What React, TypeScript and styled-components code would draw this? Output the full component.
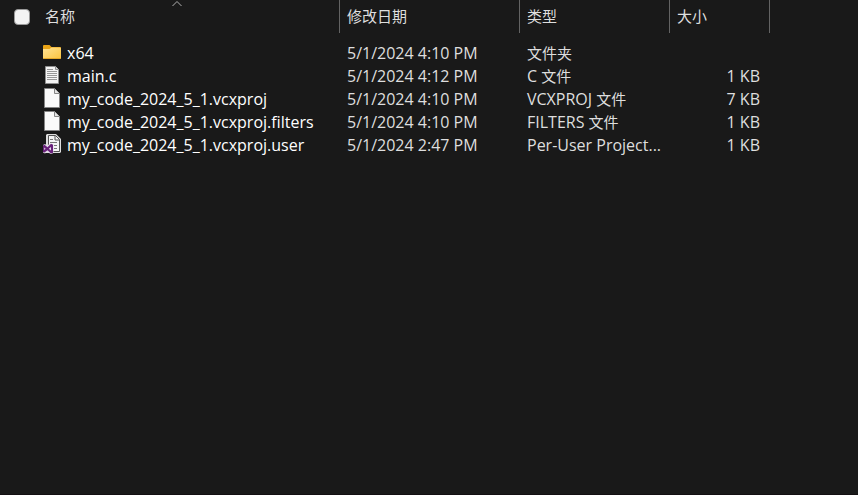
import React from "react";
import styled, { createGlobalStyle } from "styled-components";

const GlobalStyle = createGlobalStyle`
  body {
    margin: 0;
    background: #191919;
    color: #dedede;
    font: 16px/23px "Open Sans", "Noto Sans CJK SC", sans-serif;
  }
`;

const Pane = styled.main`
  box-sizing: border-box;
  min-height: 100vh;
  overflow: hidden;
  border-bottom: 1px solid #130f12;
`;

const FileTable = styled.table`
  width: 100%;
  table-layout: fixed;
  border-collapse: separate;
  border-spacing: 0;
`;

const Column = styled.col<{ $width?: number }>`
  width: ${(p) => (p.$width ? `${p.$width}px` : "auto")};
`;

const HeaderCell = styled.th`
  height: 33px;
  padding: 0;
  border-right: 1px solid #636363;
  box-sizing: border-box;
  font-weight: 400;
  text-align: left;
`;

const HeaderFiller = styled.td`
  padding: 0;
`;

const NameHeader = styled.div`
  position: relative;
  display: flex;
  align-items: center;
  gap: 8px;
  height: 33px;
  margin-left: 14px;
`;

const SortMark = styled.svg`
  position: absolute;
  top: 0;
  left: 50%;
  width: 12px;
  height: 7px;
  margin-left: -6px;
`;

const SelectAll = styled.input`
  appearance: none;
  width: 16px;
  height: 16px;
  margin: 0;
  border: 1px solid #9a9a9a;
  border-radius: 4px;
  background: #f3f3f3;
  &:checked {
    background: #4cc2ff;
  }
`;

const HeaderButton = styled.button`
  flex: 1;
  width: 100%;
  height: 33px;
  padding: 0 7px;
  border: 0;
  background: none;
  color: inherit;
  font: inherit;
  font-size: 15px;
  text-align: left;
`;

const Body = styled.tbody`
  &::before {
    content: "";
    display: block;
    height: 9px;
  }
`;

const Row = styled.tr`
  height: 23px;
  &:hover {
    background: #222222;
  }
`;

const Cell = styled.td<{ $align?: "right" }>`
  height: 23px;
  padding: ${(p) => (p.$align === "right" ? "0 10px 0 7px" : "0 2px 0 7px")};
  overflow: hidden;
  white-space: nowrap;
  text-overflow: ellipsis;
  text-align: ${(p) => p.$align ?? "left"};
`;

const Han = styled.span`
  font-size: 15px;
  line-height: 20px;
`;

const NameCell = styled.td`
  padding: 0 8px 0 42px;
`;

const FileName = styled.div`
  display: flex;
  align-items: center;
  gap: 5px;
  height: 23px;
  color: #ffffff;
  white-space: nowrap;
`;

const FileIcon = styled.svg`
  flex: none;
  width: 20px;
  height: 20px;
  margin-bottom: 3px;
`;

type Kind = "folder" | "text" | "blank" | "project";

const Icon = ({ kind }: { kind: Kind }) => (
  <FileIcon viewBox="0 0 20 20" aria-hidden="true">
    {kind === "folder" && (
      <>
        <defs>
          <linearGradient id="folder" x1="0" y1="0" x2="1" y2="1">
            <stop offset="0" stopColor="#ffe395" />
            <stop offset="1" stopColor="#fcc43e" />
          </linearGradient>
        </defs>
        <path d="M1 4a1 1 0 0 1 1-1h5.500l2 2H18a1 1 0 0 1 1 1v4H1z" fill="#e9a316" />
        <path d="M1 7h6.500l2-1.500H18a1 1 0 0 1 1 1V16a1 1 0 0 1-1 1H2a1 1 0 0 1-1-1z" fill="url(#folder)" />
        <path d="M1.500 16.500h17" stroke="#e6a92a" />
      </>
    )}
    {kind === "text" && (
      <>
        <path d="M3.500 1.500h10l3 3v14h-13z" fill="#f4f4f4" stroke="#909090" />
        <path d="M13.500 1.500v3h3" fill="#d9d9d9" stroke="#909090" />
        <path d="M5 4.500h6M5 6.500h10M5 8.500h10M5 10.500h10M5 12.500h10M5 14.500h10" stroke="#969696" />
      </>
    )}
    {kind === "blank" && (
      <>
        <path d="M2.500 .5h10l5 5v14h-15z" fill="#fafafa" stroke="#858585" />
        <path d="M12.500 .5v5h5" fill="#e4e4e4" stroke="#858585" />
      </>
    )}
    {kind === "project" && (
      <>
        <path d="M5 0h9l5 5v13l-1 1H4V1z" fill="#dedede" />
        <path d="M6.500 1.500h7l4 4v12h-11z" fill="#f5f5f5" stroke="#555555" />
        <path d="M13 1.500V6h4.500" fill="none" stroke="#555555" />
        <path d="M8 5.500h3M8 8.500h7M12 11.500h3M12 14.500h3" stroke="#777777" />
        <path d="M1 11l2-1 2 1.500L8.500 9.500l3 1v8.500L9 20l-4-2-2 1.500-2-1z" fill="#e3dbe7" />
        <path
          fillRule="evenodd"
          d="M1 11.500l1.500-.7 3 2.400L9 9.800l2 .9v8l-2 .8-3.500-3.200-3 2.300L1 18zm1.200 2v2.400l1.400-1.200zM6.800 14.700L9 16.500v-3.600z"
          fill="#68217a"
        />
      </>
    )}
  </FileIcon>
);

interface FileEntry {
  name: string;
  kind: Kind;
  date: string;
  type: string;
  han?: string;
  size: string;
}

const files: FileEntry[] = [
  { name: "x64", kind: "folder", date: "5/1/2024 4:10 PM", type: "", han: "文件夹", size: "" },
  { name: "main.c", kind: "text", date: "5/1/2024 4:12 PM", type: "C ", han: "文件", size: "1 KB" },
  { name: "my_code_2024_5_1.vcxproj", kind: "blank", date: "5/1/2024 4:10 PM", type: "VCXPROJ ", han: "文件", size: "7 KB" },
  { name: "my_code_2024_5_1.vcxproj.filters", kind: "blank", date: "5/1/2024 4:10 PM", type: "FILTERS ", han: "文件", size: "1 KB" },
  { name: "my_code_2024_5_1.vcxproj.user", kind: "project", date: "5/1/2024 2:47 PM", type: "Per-User Project...", size: "1 KB" },
];

export default function App() {
  return (
    <>
      <GlobalStyle />
      <Pane lang="zh-CN">
        <FileTable>
          <colgroup>
            <Column $width={340} />
            <Column $width={180} />
            <Column $width={150} />
            <Column $width={100} />
            <Column />
          </colgroup>
          <thead>
            <tr>
              <HeaderCell scope="col" aria-sort="ascending">
                <NameHeader>
                  <SelectAll type="checkbox" aria-label="全选" />
                  <HeaderButton type="button">名称</HeaderButton>
                  <SortMark viewBox="0 0 12 7" aria-hidden="true">
                    <path d="M1.500 6L6 1.500 10.500 6" fill="none" stroke="#b0b0b0" />
                  </SortMark>
                </NameHeader>
              </HeaderCell>
              {["修改日期", "类型", "大小"].map((label) => (
                <HeaderCell scope="col" key={label}>
                  <HeaderButton type="button">{label}</HeaderButton>
                </HeaderCell>
              ))}
              <HeaderFiller />
            </tr>
          </thead>
          <Body>
            {files.map((file) => (
              <Row key={file.name}>
                <NameCell>
                  <FileName>
                    <Icon kind={file.kind} />
                    {file.name}
                  </FileName>
                </NameCell>
                <Cell>{file.date}</Cell>
                <Cell>
                  {file.type}
                  {file.han && <Han>{file.han}</Han>}
                </Cell>
                <Cell $align="right">{file.size}</Cell>
                <Cell />
              </Row>
            ))}
          </Body>
        </FileTable>
      </Pane>
    </>
  );
}
